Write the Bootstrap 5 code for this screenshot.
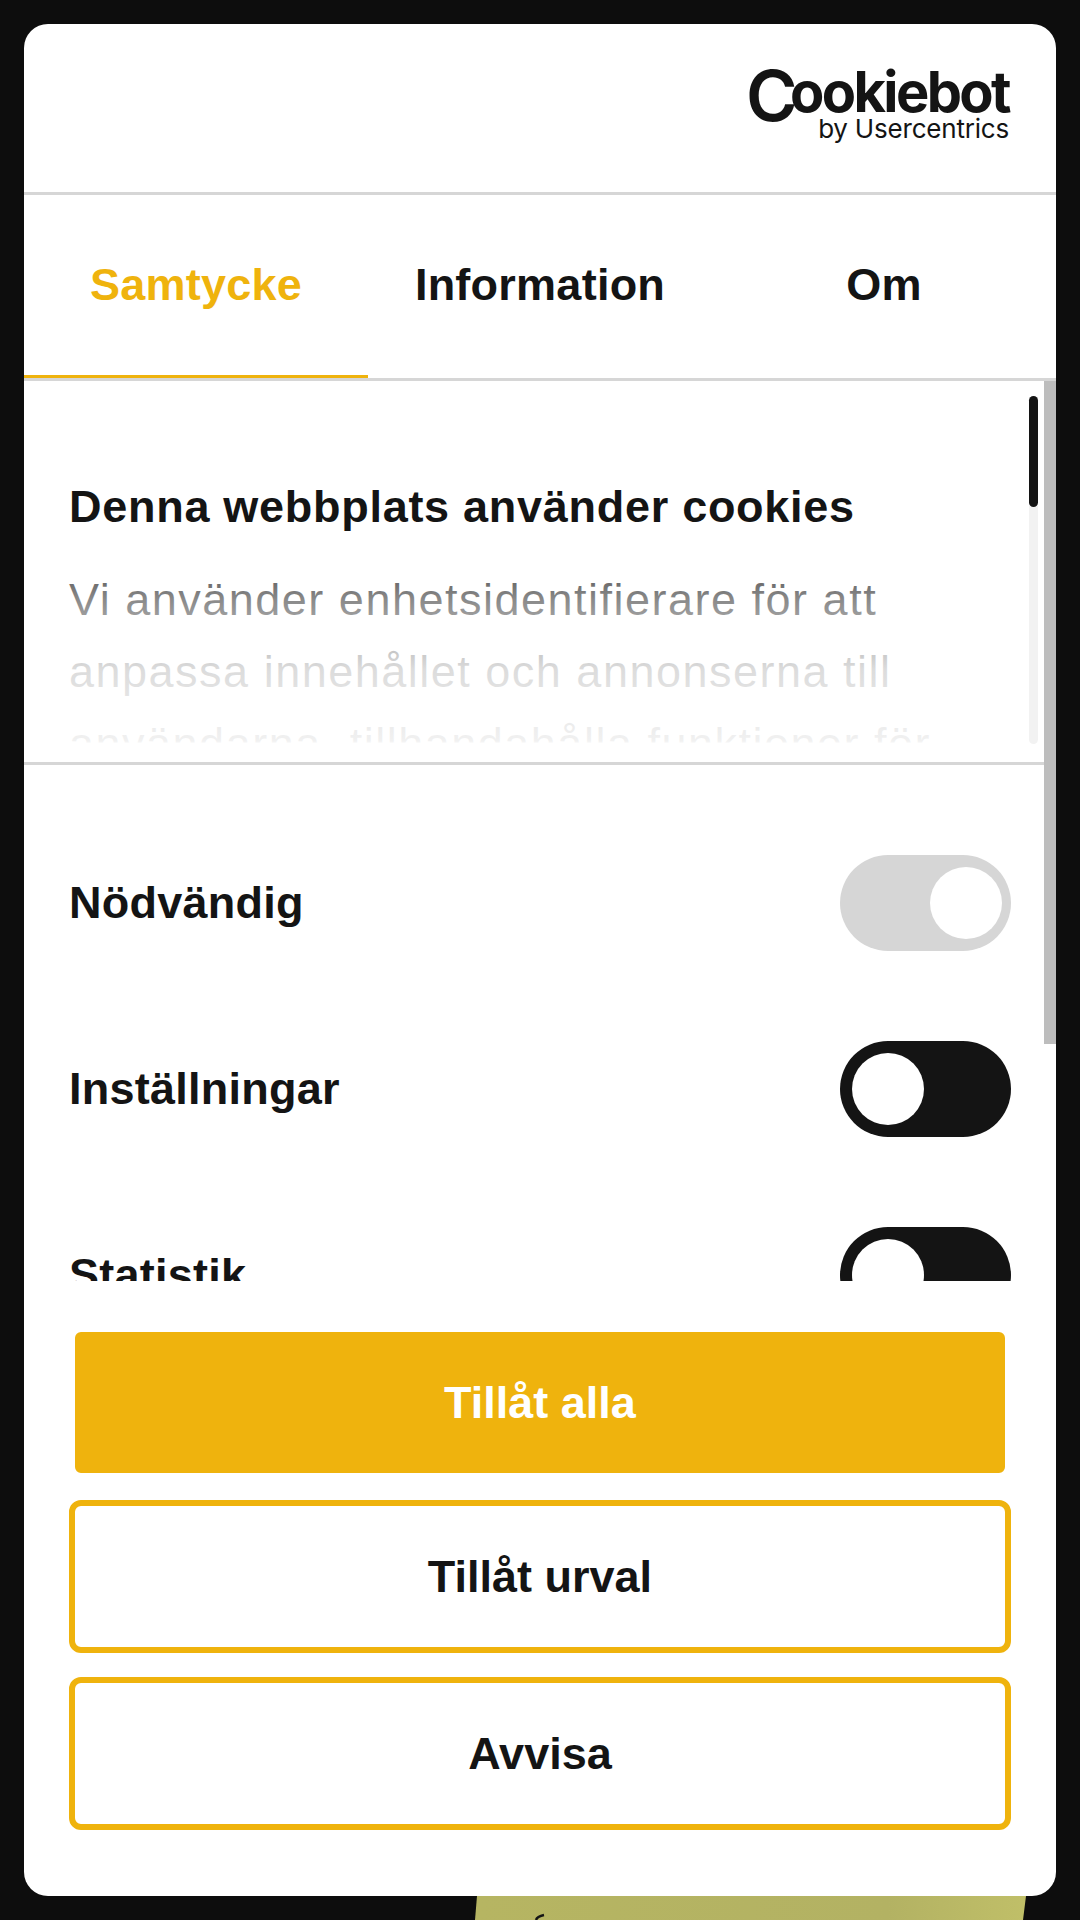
<!DOCTYPE html>
<html lang="sv">
<head>
  <meta charset="UTF-8" />
  <title>Cookiebot</title>
  <link href="https://cdn.jsdelivr.net/npm/bootstrap@5.3.3/dist/css/bootstrap.min.css" rel="stylesheet" />
  <style>
    html, body { height: 100%; }
    body {
      background-color: #0d0d0d;
      color: #141414;
      font-family: "Liberation Sans", Arial, sans-serif;
      overflow: hidden;
    }
    .page-wrap { width: 1080px; height: 1920px; padding: 24px; position: relative; }
    .page-art { position: absolute; left: 0; bottom: 0; }
    .cb-dialog { position: relative; height: 1872px; border-radius: 24px; overflow: hidden; }

    .cb-head { height: 171px; padding: 44px 47px 0 0; border-bottom: 3px solid #d6d6d6; }
    .logo-main { font-family: Inter, sans-serif; font-weight: 700; font-size: 56px; line-height: 48px; letter-spacing: -2.6px; }
    .logo-c { font-size: 70px; font-weight: 600; line-height: 0; vertical-align: -9px; margin-right: -5px; }
    .logo-sub { font-family: Inter, sans-serif; font-weight: 400; font-size: 26px; line-height: 26px; letter-spacing: -.2px; }

    .cb-tabs { height: 186px; border-bottom: 3px solid #d6d6d6; }
    .cb-tab {
      flex: 1 1 0;
      font-weight: 700; font-size: 45px; letter-spacing: .25px;
      color: #141414;
      text-decoration: none;
      border-bottom: 3px solid transparent;
    }
    .cb-tab.is-active { color: #efb30d; border-bottom-color: #efb30d; }

    .cb-intro { position: relative; height: 384px; padding: 96px 0 0 45px; border-bottom: 3px solid #d6d6d6; overflow: hidden; }
    .cb-intro h1 { font-size: 45px; font-weight: 700; line-height: 60px; letter-spacing: .72px; margin: 0 0 27px; }
    .cb-intro p { width: 900px; font-size: 45px; line-height: 72px; letter-spacing: 1.5px; margin: 0; }
    .cb-fade {
      position: absolute; left: 0; right: 0; bottom: 0; height: 232px;
      background: linear-gradient(to bottom, rgba(255,255,255,0) 0%, rgba(255,255,255,.5) 30%, rgba(255,255,255,.85) 60%, rgba(255,255,255,.94) 91%, #fff 92%);
    }
    .cb-track { position: absolute; left: 1005px; top: 15px; width: 9px; height: 348px; border-radius: 5px; background: #f2f2f2; }
    .cb-thumb { width: 9px; height: 111px; border-radius: 5px; background: #141414; }
    .cb-outer-bar { position: absolute; left: 1020px; top: 357px; width: 12px; height: 663px; background: #bdbdbd; }

    .cb-options { height: 516px; padding: 90px 45px 0; overflow: hidden; gap: 90px; }
    .cb-option { flex: 0 0 96px; font-weight: 700; font-size: 45px; letter-spacing: .25px; }
    .cb-toggle { width: 171px; height: 96px; border-radius: 48px; padding: 12px; background: #141414; }
    .cb-toggle.is-locked { background: #d6d6d6; padding-right: 9px; }
    .cb-knob { width: 72px; height: 72px; border-radius: 50%; background: #fff; }

    .cb-actions { padding: 45px 45px 0; }
    .cb-btn {
      --bs-btn-padding-y: 0;
      height: 153px;
      border-radius: 12px;
      border: 6px solid #efb30d;
      font-weight: 700; font-size: 45px;
      color: #141414;
      background: #fff;
      margin-bottom: 24px;
    }
    .cb-btn.is-primary { background: #efb30d; color: #fff; border-color: #fff; margin-bottom: 21px; }
  </style>
</head>
<body>
  <div class="page-wrap">
    <svg class="page-art" width="1080" height="24" viewBox="0 0 1080 24">
      <defs>
        <linearGradient id="artFill" x1="0" x2="1" y1="0" y2="0">
          <stop offset="0" stop-color="#b6b562" />
          <stop offset=".75" stop-color="#b3b263" />
          <stop offset="1" stop-color="#c0bf68" />
        </linearGradient>
      </defs>
      <polygon points="477,0 1026,0 1023,24 475,24" fill="url(#artFill)" />
      <path d="M544 19 C539 20 537 21 536 24" fill="none" stroke="#141414" stroke-width="2.5" />
    </svg>

    <div class="cb-dialog bg-white d-flex flex-column">
      <header class="cb-head d-flex flex-column align-items-end">
        <div class="logo-main"><span class="logo-c">C</span>ookiebot</div>
        <div class="logo-sub">by Usercentrics</div>
      </header>

      <nav class="cb-tabs d-flex">
        <a class="cb-tab is-active d-flex align-items-center justify-content-center" href="#">Samtycke</a>
        <a class="cb-tab d-flex align-items-center justify-content-center" href="#">Information</a>
        <a class="cb-tab d-flex align-items-center justify-content-center" href="#">Om</a>
      </nav>

      <section class="cb-intro">
        <h1>Denna webbplats använder cookies</h1>
        <p>Vi använder enhetsidentifierare för att anpassa innehållet och annonserna till användarna, tillhandahålla funktioner för sociala medier och analysera vår trafik.</p>
        <div class="cb-fade"></div>
        <div class="cb-track"><div class="cb-thumb"></div></div>
      </section>

      <section class="cb-options d-flex flex-column">
        <div class="cb-option d-flex justify-content-between align-items-center">
          <span>Nödvändig</span>
          <span class="cb-toggle is-locked d-flex justify-content-end"><span class="cb-knob"></span></span>
        </div>
        <div class="cb-option d-flex justify-content-between align-items-center">
          <span>Inställningar</span>
          <span class="cb-toggle d-flex"><span class="cb-knob"></span></span>
        </div>
        <div class="cb-option d-flex justify-content-between align-items-center">
          <span>Statistik</span>
          <span class="cb-toggle d-flex"><span class="cb-knob"></span></span>
        </div>
      </section>

      <footer class="cb-actions d-flex flex-column">
        <button class="btn cb-btn is-primary w-100" type="button">Tillåt alla</button>
        <button class="btn cb-btn w-100" type="button">Tillåt urval</button>
        <button class="btn cb-btn w-100" type="button">Avvisa</button>
      </footer>

      <div class="cb-outer-bar"></div>
    </div>
  </div>
  <script src="https://cdn.jsdelivr.net/npm/bootstrap@5.3.3/dist/js/bootstrap.bundle.min.js"></script>
</body>
</html>
